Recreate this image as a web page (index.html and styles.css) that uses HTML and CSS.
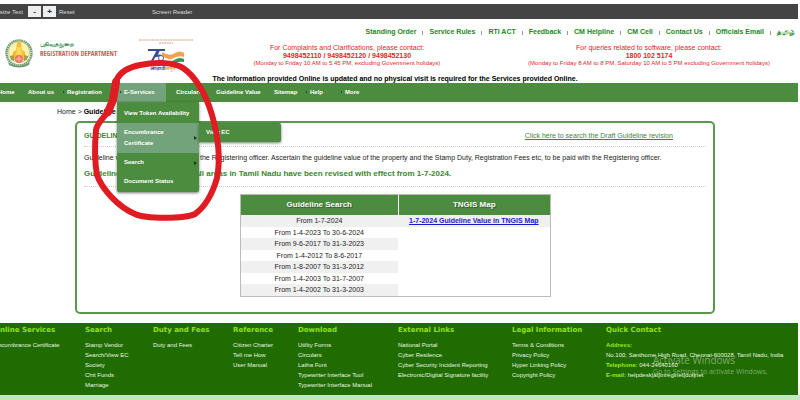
FILE: index.html
```html
<!DOCTYPE html>
<html lang="en">
<head>
<meta charset="utf-8">
<title>Registration Department - Guideline Value</title>
<link rel="stylesheet" href="styles.css">
</head>
<body>
<div class="topbar">
  <span>Resize Text</span>
  <button type="button" class="size-btn" aria-label="Decrease text size">-</button>
  <button type="button" class="size-btn" aria-label="Increase text size">+</button>
  <a href="#" class="reset">Reset</a>
  <a href="#" class="reader">Screen Reader</a>
</div>

<header class="header">
  <nav class="quick-links">
    <a href="#">Standing Order</a><i></i><a href="#">Service Rules</a><i></i><a href="#">RTI ACT</a><i></i><a href="#">Feedback</a><i></i><a href="#">CM Helpline</a><i></i><a href="#">CM Cell</a><i></i><a href="#">Contact Us</a><i></i><a href="#">Officials Email</a><i></i><a href="#" lang="ta">தமிழ்</a>
  </nav>
  <div class="masthead">
    <svg class="emblem" viewBox="0 0 30 32" aria-hidden="true">
      <circle cx="15" cy="16" r="12.5" fill="#fffdf0" stroke="#6c9c70" stroke-width="2.5" stroke-dasharray="1.6 .5"/>
      <circle cx="15" cy="15" r="10.5" fill="#fff3b0" stroke="#a8b77a" stroke-width=".7"/>
      <path d="M8 23l1-8 3-2 1-7 2-2 2 2 1 7 3 2 1 8z" fill="#f6bd35"/>
      <path d="M12 18l1-8h4l1 8z" fill="#ffd958"/>
      <path d="M6 19l4-1v6l-3-1zm18 0-4-1v6l3-1z" fill="#a99d52"/>
      <circle cx="15" cy="22" r="4" fill="#ee7365"/>
      <path d="M12 22h6M15 19v6" stroke="#fbc0a5"/>
      <path d="M4 25q11 8 22 0l-1 3q-10 5-20 0z" fill="#6b9c6d"/>
    </svg>
    <div class="brand"><span class="brand-ta" lang="ta">பதிவுத்துறை</span><span class="brand-en">REGISTRATION DEPARTMENT</span></div>
    <svg class="azadi" viewBox="0 0 56 36" aria-hidden="true">
      <path d="M1 4h54" stroke="#c8a67d" stroke-dasharray="2 .6"/>
      <path d="M21 7h14" stroke="#d0a083" stroke-dasharray="2 .6"/>
      <path d="M10 14h10l-7 13M27 14h-6l-3 6q7-2 6 3t-9 4" fill="none" stroke="#354d93" stroke-width="2"/>
      <path d="M24 16q8 5 13 1 5-3 9 0v4q-5-2-10 1-5 3-12-2z" fill="#f0a24d"/>
      <path d="M25 24q8 3 13-1 4-2 8 0v3q-4-1-8 1-6 4-13 0z" fill="#399358"/>
      <circle cx="23" cy="22" r="2.5" fill="#fff" stroke="#4662a2"/>
      <text x="12" y="34" class="azadi-a">आज़ादी</text><text x="27" y="34" class="azadi-b">अमृत</text>
    </svg>
    <div class="contact contact-main"><span>For Complaints and Clarifications, please contact:</span><b>9498452110 / 9498452120 / 9498452130</b><small>(Monday to Friday 10 AM to 5.45 PM, excluding Government holidays)</small></div>
    <div class="contact"><span>For queries related to software, please contact:</span><b>1800 102 5174</b><small>(Monday to Friday 8 AM to 8 PM, Saturday 10 AM to 5 PM excluding Government holidays)</small></div>
  </div>
  <p class="notice">The information provided Online is updated and no physical visit is required for the Services provided Online.</p>
</header>

<nav class="mainnav">
  <a href="#">Home</a>
  <a href="#">About us</a>
  <a href="#" class="more">Registration</a>
  <div class="open">
    <a href="#" class="more">E-Services</a>
    <div class="menu">
      <a href="#">View Token Availability</a>
      <a href="#" class="active sub">Encumbrance<br>Certificate</a>
      <a href="#" class="sub">Search</a>
      <a href="#">Document Status</a>
      <div class="submenu"><a href="#">View EC</a></div>
    </div>
  </div>
  <a href="#">Circulars</a>
  <a href="#">Guideline Value</a>
  <a href="#">Sitemap</a>
  <a href="#" class="more">Help</a>
  <a href="#" class="more">More</a>
</nav>

<main>
  <p class="crumbs"><a href="#">Home</a> &gt; <b>Guideline Value</b></p>
  <section class="panel">
    <div class="panel-head"><h1>GUIDELINE VALUE</h1><a href="#">Click here to search the Draft Guideline revision</a></div>
    <div class="panel-text">
      <p>Guideline value is available now with the Registering officer. Ascertain the guideline value of the property and the Stamp Duty, Registration Fees etc, to be paid with the Registering officer.</p>
      <p class="revised">Guideline value in respect of all areas in Tamil Nadu have been revised with effect from 1-7-2024.</p>
    </div>
    <table class="values">
      <thead><tr><th>Guideline Search</th><th>TNGIS Map</th></tr></thead>
      <tbody>
        <tr><td>From 1-7-2024</td><td class="map"><a href="#">1-7-2024 Guideline Value in TNGIS Map</a></td></tr>
        <tr><td>From 1-4-2023 To 30-6-2024</td><td rowspan="6"></td></tr>
        <tr><td>From 9-6-2017 To 31-3-2023</td></tr>
        <tr><td>From 1-4-2012 To 8-6-2017</td></tr>
        <tr><td>From 1-8-2007 To 31-3-2012</td></tr>
        <tr><td>From 1-4-2003 To 31-7-2007</td></tr>
        <tr><td>From 1-4-2002 To 31-3-2003</td></tr>
      </tbody>
    </table>
  </section>
</main>

<footer class="footer">
  <section><h2>Online Services</h2><a href="#">Encumbrance Certificate</a></section>
  <section><h2>Search</h2><a href="#">Stamp Vendor</a><a href="#">Search/View EC</a><a href="#">Society</a><a href="#">Chit Funds</a><a href="#">Marriage</a></section>
  <section><h2>Duty and Fees</h2><a href="#">Duty and Fees</a></section>
  <section><h2>Reference</h2><a href="#">Citizen Charter</a><a href="#">Tell me How</a><a href="#">User Manual</a></section>
  <section><h2>Download</h2><a href="#">Utility Forms</a><a href="#">Circulars</a><a href="#">Latha Font</a><a href="#">Typewriter Interface Tool</a><a href="#">Typewriter Interface Manual</a></section>
  <section><h2>External Links</h2><a href="#">National Portal</a><a href="#">Cyber Resilence</a><a href="#">Cyber Security Incident Reporting</a><a href="#">Electronic/Digital Signature facility</a></section>
  <section><h2>Legal Information</h2><a href="#">Terms &amp; Conditions</a><a href="#">Privacy Policy</a><a href="#">Hyper Linking Policy</a><a href="#">Copyright Policy</a></section>
  <section><h2>Quick Contact</h2><p><b>Address:</b></p><p>No.100, Santhome High Road, Chennai-600028, Tamil Nadu, India</p><p><b>Telephone:</b> 044-24640160</p><p><b>E-mail:</b> helpdesk[at]tnreginet[dot]net</p></section>
  <div class="watermark"><strong>Activate Windows</strong><span>Go to Settings to activate Windows.</span></div>
</footer>

<svg class="marker" width="140" height="170" viewBox="90 55 140 170" aria-hidden="true">
  <g fill="none" stroke="#e01b22" stroke-width="6" stroke-linecap="round" stroke-linejoin="round">
    <path d="M117 79C121 71 130 67 140 65C155 62 174 62 183 68C195 76 206 94 212 115C218 136 221 157 217 178C213 192 206 206 195 214C185 219 145 219 135 214C118 207 102 189 97 175C94 158 95 141 96 130C97 123 104 118 109 110"/>
    <path d="M116 82L113 100L108 112" stroke-width="8"/>
  </g>
</svg>
</body>
</html>
```
FILE: styles.css
```css
* { box-sizing: border-box; }
body {
  margin: 0;
  padding: 4px 2px 0 0;
  min-height: 100vh;
  display: flex;
  flex-direction: column;
  overflow: hidden;
  position: relative;
  background: #fff;
  border-bottom: 5px solid #c0e8c0;
  font-family: "Liberation Sans", "Noto Sans", sans-serif;
  font-size: 7px;
  line-height: 8px;
  color: #222;
}
a { color: inherit; text-decoration: none; }
p, h1, h2 { margin: 0; }

.topbar {
  display: flex;
  align-items: center;
  height: 15px;
  margin-left: -8px;
  background: #444;
  color: #ddd;
  font-size: 6px;
  white-space: nowrap;
}
.topbar span { width: 36px; }
.size-btn {
  width: 13px;
  height: 11px;
  margin-right: 2px;
  padding: 0;
  border: 0;
  background: #eee;
  color: #222;
  font: bold 8px/10px "Liberation Sans", sans-serif;
}
.reset { margin-left: 1px; width: 93px; }

.header { white-space: nowrap; }
.quick-links {
  display: flex;
  justify-content: flex-end;
  align-items: center;
  padding: 9px 3px 0 0;
  color: #23891d;
  font-weight: bold;
}
.quick-links i { width: 1px; height: 4px; margin: 2px 6px 0; background: #999; }
.masthead { display: flex; height: 39px; }
.emblem { width: 30px; height: 32px; margin: 1px 6px 0 4px; }
.brand { width: 98px; padding-top: 4px; }
.brand span { display: block; }
.brand-ta { color: #277e3b; font: bold 6px/9px "Noto Sans", sans-serif; }
.brand-en { color: #c75e51; font: bold 7px/9px "Liberation Sans Narrow", "Open Sans Condensed", sans-serif; }
.azadi { width: 56px; height: 36px; }
.azadi text { font: bold 5px "Noto Sans", sans-serif; }
.azadi-a { fill: #354d93; }
.azadi-b { fill: #e0a34a; }
.contact {
  flex: 1;
  display: flex;
  flex-direction: column;
  align-items: center;
  padding-top: 8px;
  color: #e0262b;
}
.contact-main { flex: 0 0 306px; }
.contact small { font-size: 6px; line-height: 7px; }
.notice { text-align: center; padding-right: 8px; font-weight: bold; color: #000; }

.mainnav {
  display: grid;
  grid-template-columns: 30px 35px 54px 49px 50px 58px 36px 35px 30px;
  align-items: stretch;
  height: 19px;
  margin: 0 0 0 -2px;
  background: #4c8c3f;
  color: #fff;
  font-size: 6px;
  font-weight: bold;
  line-height: 19px;
  white-space: nowrap;
}
.more::before { content: ""; float: left; width: 1px; height: 2px; margin: 8px 0 0 -4px; background: #254d20; }
.mainnav > a:nth-child(3) { padding-left: 4px; }
.open { position: relative; padding-left: 7px; background: #73a37a; }
.open + a { padding-left: 10px; }
.menu {
  position: absolute;
  z-index: 2;
  top: 19px;
  left: 0;
  width: 82px;
  padding: 2px 0 1px;
  background: #4c8c3f;
  border-radius: 0 0 2px 2px;
  box-shadow: 0 1px 3px #0008;
  line-height: 11px;
}
.menu a { display: block; padding: 4px 7px; }
.menu .active { background: #73a37a; }
.menu .sub { position: relative; }
.sub::after {
  content: "";
  position: absolute;
  right: 2px;
  top: calc(50% - 2px);
  border: 2px solid transparent;
  border-left: 3px solid #173b15;
  border-right: 0;
}
.submenu {
  position: absolute;
  left: 82px;
  top: 21px;
  width: 82px;
  background: #4c8c3f;
  border-radius: 0 2px 2px 0;
  box-shadow: 0 1px 3px #0008;
}

.crumbs { padding: 5px 0 5px 57px; line-height: 9px; }
.crumbs b { color: #000; }
.panel {
  margin: 0 83px 9px 75px;
  padding: 7px 7px 15px;
  border: 2px solid #5a9850;
  border-radius: 5px;
}
.panel-head {
  display: flex;
  justify-content: space-between;
  padding: 2px 33px 6px 0;
  border-bottom: 1px dotted #ccc;
  color: #3b8634;
}
.panel-head h1 { font-size: 7px; line-height: 8px; }
.panel-head a { text-decoration: underline; line-height: 8px; }
.panel-text { padding: 6px 0 7px; border-bottom: 1px dotted #ccc; white-space: nowrap; }
.panel-text p { line-height: 10px; }
.panel-text .revised { margin-top: 6px; font-size: 8px; color: #39862e; font-weight: bold; }
.values {
  width: 50%;
  margin: 7px auto 0;
  border: 1px solid #bbb;
  border-collapse: separate;
  border-spacing: 0;
  table-layout: fixed;
  text-align: center;
}
.values th {
  height: 20px;
  padding: 0;
  background: #4c8c3f;
  color: #fff;
  font-size: 8px;
  text-shadow: 1px 1px 1px #0006;
}
.values th:first-child { width: 51%; }
.values th + th { border-left: 1px solid #fff; }
.values td { height: 11px; padding: 0; line-height: 10px; }
.values tr:nth-child(odd) td { height: 12px; background: #f0f0f0; }
.map a { color: #1a1ac8; font-weight: bold; text-decoration: underline; }

.footer {
  flex: 1;
  position: relative;
  display: grid;
  grid-template-columns: 91px 68px 80px 65px 100px 114px 94px 1fr;
  align-items: start;
  margin-left: -6px;
  padding-top: 3px;
  background: #206c00;
  color: #e8f4e0;
  font-size: 6px;
  line-height: 10px;
  white-space: nowrap;
}
.footer h2 { margin-bottom: 5px; color: #8fe600; font: bold 7px/9px "DejaVu Sans", sans-serif; }
.footer section > a { display: block; }
.footer p b { color: #9be91c; }
.watermark {
  position: absolute;
  right: 25px;
  top: 30px;
  width: 120px;
  color: #ffffff70;
  font-family: "Open Sans", sans-serif;
}
.watermark strong, .watermark span { display: block; font-weight: normal; }
.watermark strong { font-size: 10px; line-height: 14px; }
.watermark span { font-size: 7px; }
.marker { position: absolute; z-index: 3; left: 90px; top: 55px; }
```
